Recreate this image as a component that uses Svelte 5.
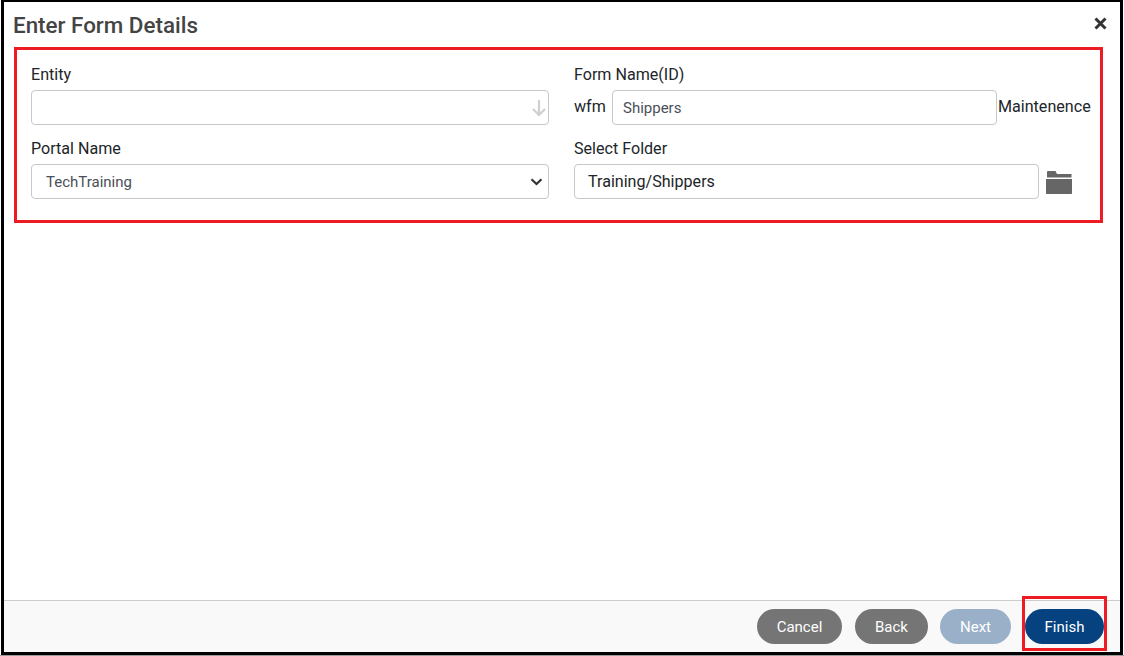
<script>
	const buttons = [
		{ label: 'Cancel', kind: 'grey', width: 85 },
		{ label: 'Back', kind: 'grey', width: 73 },
		{ label: 'Next', kind: 'muted', width: 71 },
		{ label: 'Finish', kind: 'primary', width: 79 }
	];
</script>

<div class="dialog">
	<header class="head">
		<h1>Enter Form Details</h1>
		<button class="close" aria-label="Close">
			<svg viewBox="0 0 13 13" width="13" height="13">
				<path d="M1.500 1.500l10 10M11.500 1.500l-10 10" stroke="#333" stroke-width="3" fill="none" />
			</svg>
		</button>
	</header>

	<section class="form">
		<div class="field">
			<span class="label">Entity</span>
			<div class="box entity">
				<svg viewBox="0 0 14 18" width="14" height="18">
					<path d="M7 1v15M1 10l6 6 6-6" stroke="#cfcfcf" stroke-width="2.200" fill="none" />
				</svg>
			</div>
		</div>
		<div class="field">
			<span class="label">Form Name(ID)</span>
			<div class="row">
				<span class="prefix">wfm</span>
				<div class="box small">Shippers</div>
				<span class="suffix">Maintenence</span>
			</div>
		</div>
		<div class="field">
			<span class="label">Portal Name</span>
			<div class="box select small">
				TechTraining
				<svg viewBox="0 0 13 8" width="13" height="8">
					<path d="M1.500 1.200L6.500 6l5-4.800" stroke="#333" stroke-width="2.200" fill="none" />
				</svg>
			</div>
		</div>
		<div class="field">
			<span class="label">Select Folder</span>
			<div class="row folder-row">
				<div class="box folder">Training/Shippers</div>
				<svg class="folder-icon" viewBox="0 0 26 23" width="26" height="23">
					<path d="M1 6.500V1L1.500 0h8L11 3h14.500v3.500z" fill="#666" />
					<path d="M0 8h26v14.500l-0.500 0.500H0.500L0 22.500z" fill="#666" />
				</svg>
			</div>
		</div>
	</section>

	<div class="spacer"></div>

	<footer class="foot">
		{#each buttons as b}
			<button class="btn {b.kind}" style:width="{b.width}px">{b.label}</button>
		{/each}
		<div class="mark"></div>
	</footer>
</div>
<div class="backdrop"></div>

<style>
	:global(body) {
		margin: 0;
		background: #fff;
	}

	.dialog {
		box-sizing: border-box;
		width: 1122px;
		height: 655px;
		margin-left: 1px;
		border: solid #000;
		border-width: 2px 3px 3px 3px;
		background: #fff;
		display: flex;
		flex-direction: column;
		font-family: Roboto, 'Liberation Sans', sans-serif;
		color: #212529;
	}

	.backdrop {
		height: 1px;
		background: #9a9a9a;
	}

	.head {
		height: 45px;
		flex: none;
		display: flex;
		align-items: center;
		justify-content: space-between;
		padding: 0 13px 0 9px;
	}

	h1 {
		margin: 0;
		font-size: 22.400px;
		font-weight: 500;
		color: #444;
	}

	.close {
		border: 0;
		padding: 0;
		margin-bottom: 2px;
		background: none;
		display: flex;
	}

	.form {
		box-sizing: border-box;
		width: 1089px;
		height: 176px;
		margin-left: 10px;
		border: 3px solid #ed1c24;
		padding: 14px 0 0 14px;
		display: grid;
		grid-template-columns: 518px 517px;
		column-gap: 25px;
		grid-auto-rows: 74px;
		flex: none;
	}

	.label {
		display: block;
		font-size: 16.100px;
		line-height: 22px;
		height: 26px;
	}

	.box {
		box-sizing: border-box;
		height: 35px;
		border: 1px solid #c8c8c8;
		border-radius: 4px;
		background: #fff;
		display: flex;
		align-items: center;
		font-size: 16.100px;
		padding-left: 13px;
	}

	.small {
		font-size: 15px;
		color: #495057;
		padding-left: 10px;
	}

	.entity {
		justify-content: flex-end;
		padding-right: 2px;
	}

	.select {
		justify-content: space-between;
		padding: 0 5px 0 14px;
	}

	.row {
		display: flex;
		align-items: center;
		font-size: 16.100px;
	}

	.prefix {
		width: 38px;
		flex: none;
		margin-bottom: 2px;
	}

	.row .small {
		width: 385px;
		flex: none;
	}

	.suffix {
		margin-left: 1px;
		margin-bottom: 2px;
	}

	.folder {
		width: 465px;
		flex: none;
		color: #212529;
	}

	.folder-icon {
		margin: 2px 0 0 7px;
	}

	.spacer {
		flex: 1;
	}

	.foot {
		height: 52px;
		flex: none;
		border-top: 1px solid #ccc;
		background: #f9f9f9;
		box-sizing: border-box;
		display: flex;
		justify-content: flex-end;
		align-items: flex-start;
		gap: 13px;
		padding: 8px 16px 0 0;
		position: relative;
	}

	.btn {
		height: 35px;
		border: 0;
		border-radius: 18px;
		color: #fff;
		font-family: inherit;
		font-size: 15px;
		font-weight: 400;
		padding: 0;
	}

	.grey {
		background: #757575;
	}

	.muted {
		background: #9ab0c8;
		margin-left: -1px;
	}

	.primary {
		background: #05427f;
		margin-left: 1px;
	}

	.mark {
		position: absolute;
		right: 13px;
		top: -5px;
		width: 85px;
		height: 55px;
		border: 3px solid #ed1c24;
		box-sizing: border-box;
	}
</style>
